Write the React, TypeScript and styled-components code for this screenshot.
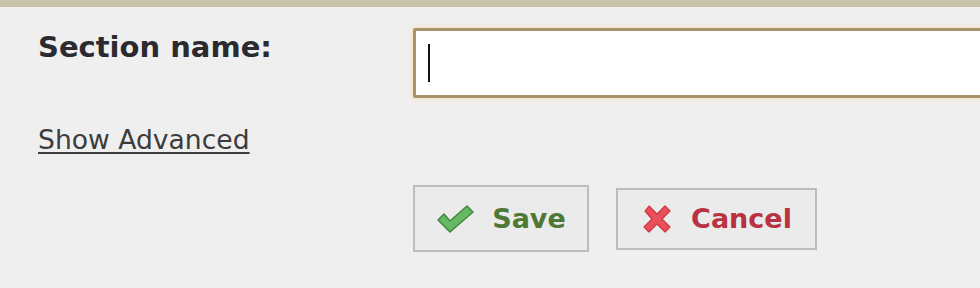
import styled, { createGlobalStyle } from "styled-components";

const GlobalStyle = createGlobalStyle`
  html, body {
    margin: 0;
    padding: 0;
    background: #efefef;
    overflow: hidden;
  }
  body {
    font-family: "DejaVu Sans", Verdana, sans-serif;
  }
`;

const TopBar = styled.div`
  height: 7px;
  background: #c8c2a8;
`;

const Form = styled.div`
  display: grid;
  grid-template-columns: 375px 1fr;
  padding: 21px 0 0 38px;
`;

const Label = styled.label`
  font-size: 29px;
  line-height: 34px;
  font-weight: bold;
  color: #2a2a30;
  padding-top: 2px;
`;

const InputBox = styled.div`
  height: 64px;
  margin-right: -20px;
  background: #fff;
  border: 3px solid #a89268;
  border-radius: 2px;
  box-shadow: 0 0 4px 1px #f4e3c0;
  display: flex;
  align-items: center;
  padding-left: 12px;
`;

const Caret = styled.span`
  width: 2px;
  height: 38px;
  background: #111;
`;

const AdvancedLink = styled.a`
  grid-column: 1 / 3;
  margin-top: 27px;
  font-size: 26.6px;
  line-height: 30px;
  color: #3c3c3c;
  text-decoration: underline;
  text-decoration-thickness: 2px;
  text-underline-offset: 3px;
  cursor: pointer;
  justify-self: start;
`;

const Buttons = styled.div`
  grid-column: 2;
  display: flex;
  align-items: center;
  gap: 27px;
  margin-top: 30px;
`;

const Button = styled.button<{ tone: "green" | "red"; w: number; h: number }>`
  width: ${({ w }) => w}px;
  height: ${({ h }) => h}px;
  display: flex;
  align-items: center;
  justify-content: center;
  gap: 18px;
  background: #ebebeb;
  border: 2px solid #bdbdbd;
  font-family: "DejaVu Sans", Verdana, sans-serif;
  font-size: 27px;
  font-weight: bold;
  color: ${({ tone }) => (tone === "green" ? "#4c7a35" : "#b83242")};
  cursor: pointer;
  padding: 0;
`;

const CheckIcon = () => (
  <svg width="38" height="30" viewBox="0 0 38 30">
    <path
      d="M2 16 L8 10 L14 17 L31 2 L37 8 L14 28 Z"
      fill="#66b864"
      stroke="#3f8a3e"
      strokeWidth="1.5"
      strokeLinejoin="round"
    />
  </svg>
);

const CrossIcon = () => (
  <svg width="32" height="32" viewBox="0 0 32 32">
    <path
      d="M4 8 L8 3 L16 11 L24 3 L29 8 L21 16 L29 24 L24 29 L16 21 L8 29 L3 24 L11 16 Z"
      fill="#e8505a"
      stroke="#d03640"
      strokeWidth="1.2"
      strokeLinejoin="round"
    />
  </svg>
);

export default function App() {
  return (
    <>
      <GlobalStyle />
      <TopBar />
      <Form>
        <Label>Section name:</Label>
        <InputBox>
          <Caret />
        </InputBox>
        <AdvancedLink>Show Advanced</AdvancedLink>
        <Buttons>
          <Button tone="green" w={176} h={67}>
            <CheckIcon />
            Save
          </Button>
          <Button tone="red" w={201} h={62}>
            <CrossIcon />
            Cancel
          </Button>
        </Buttons>
      </Form>
    </>
  );
}
